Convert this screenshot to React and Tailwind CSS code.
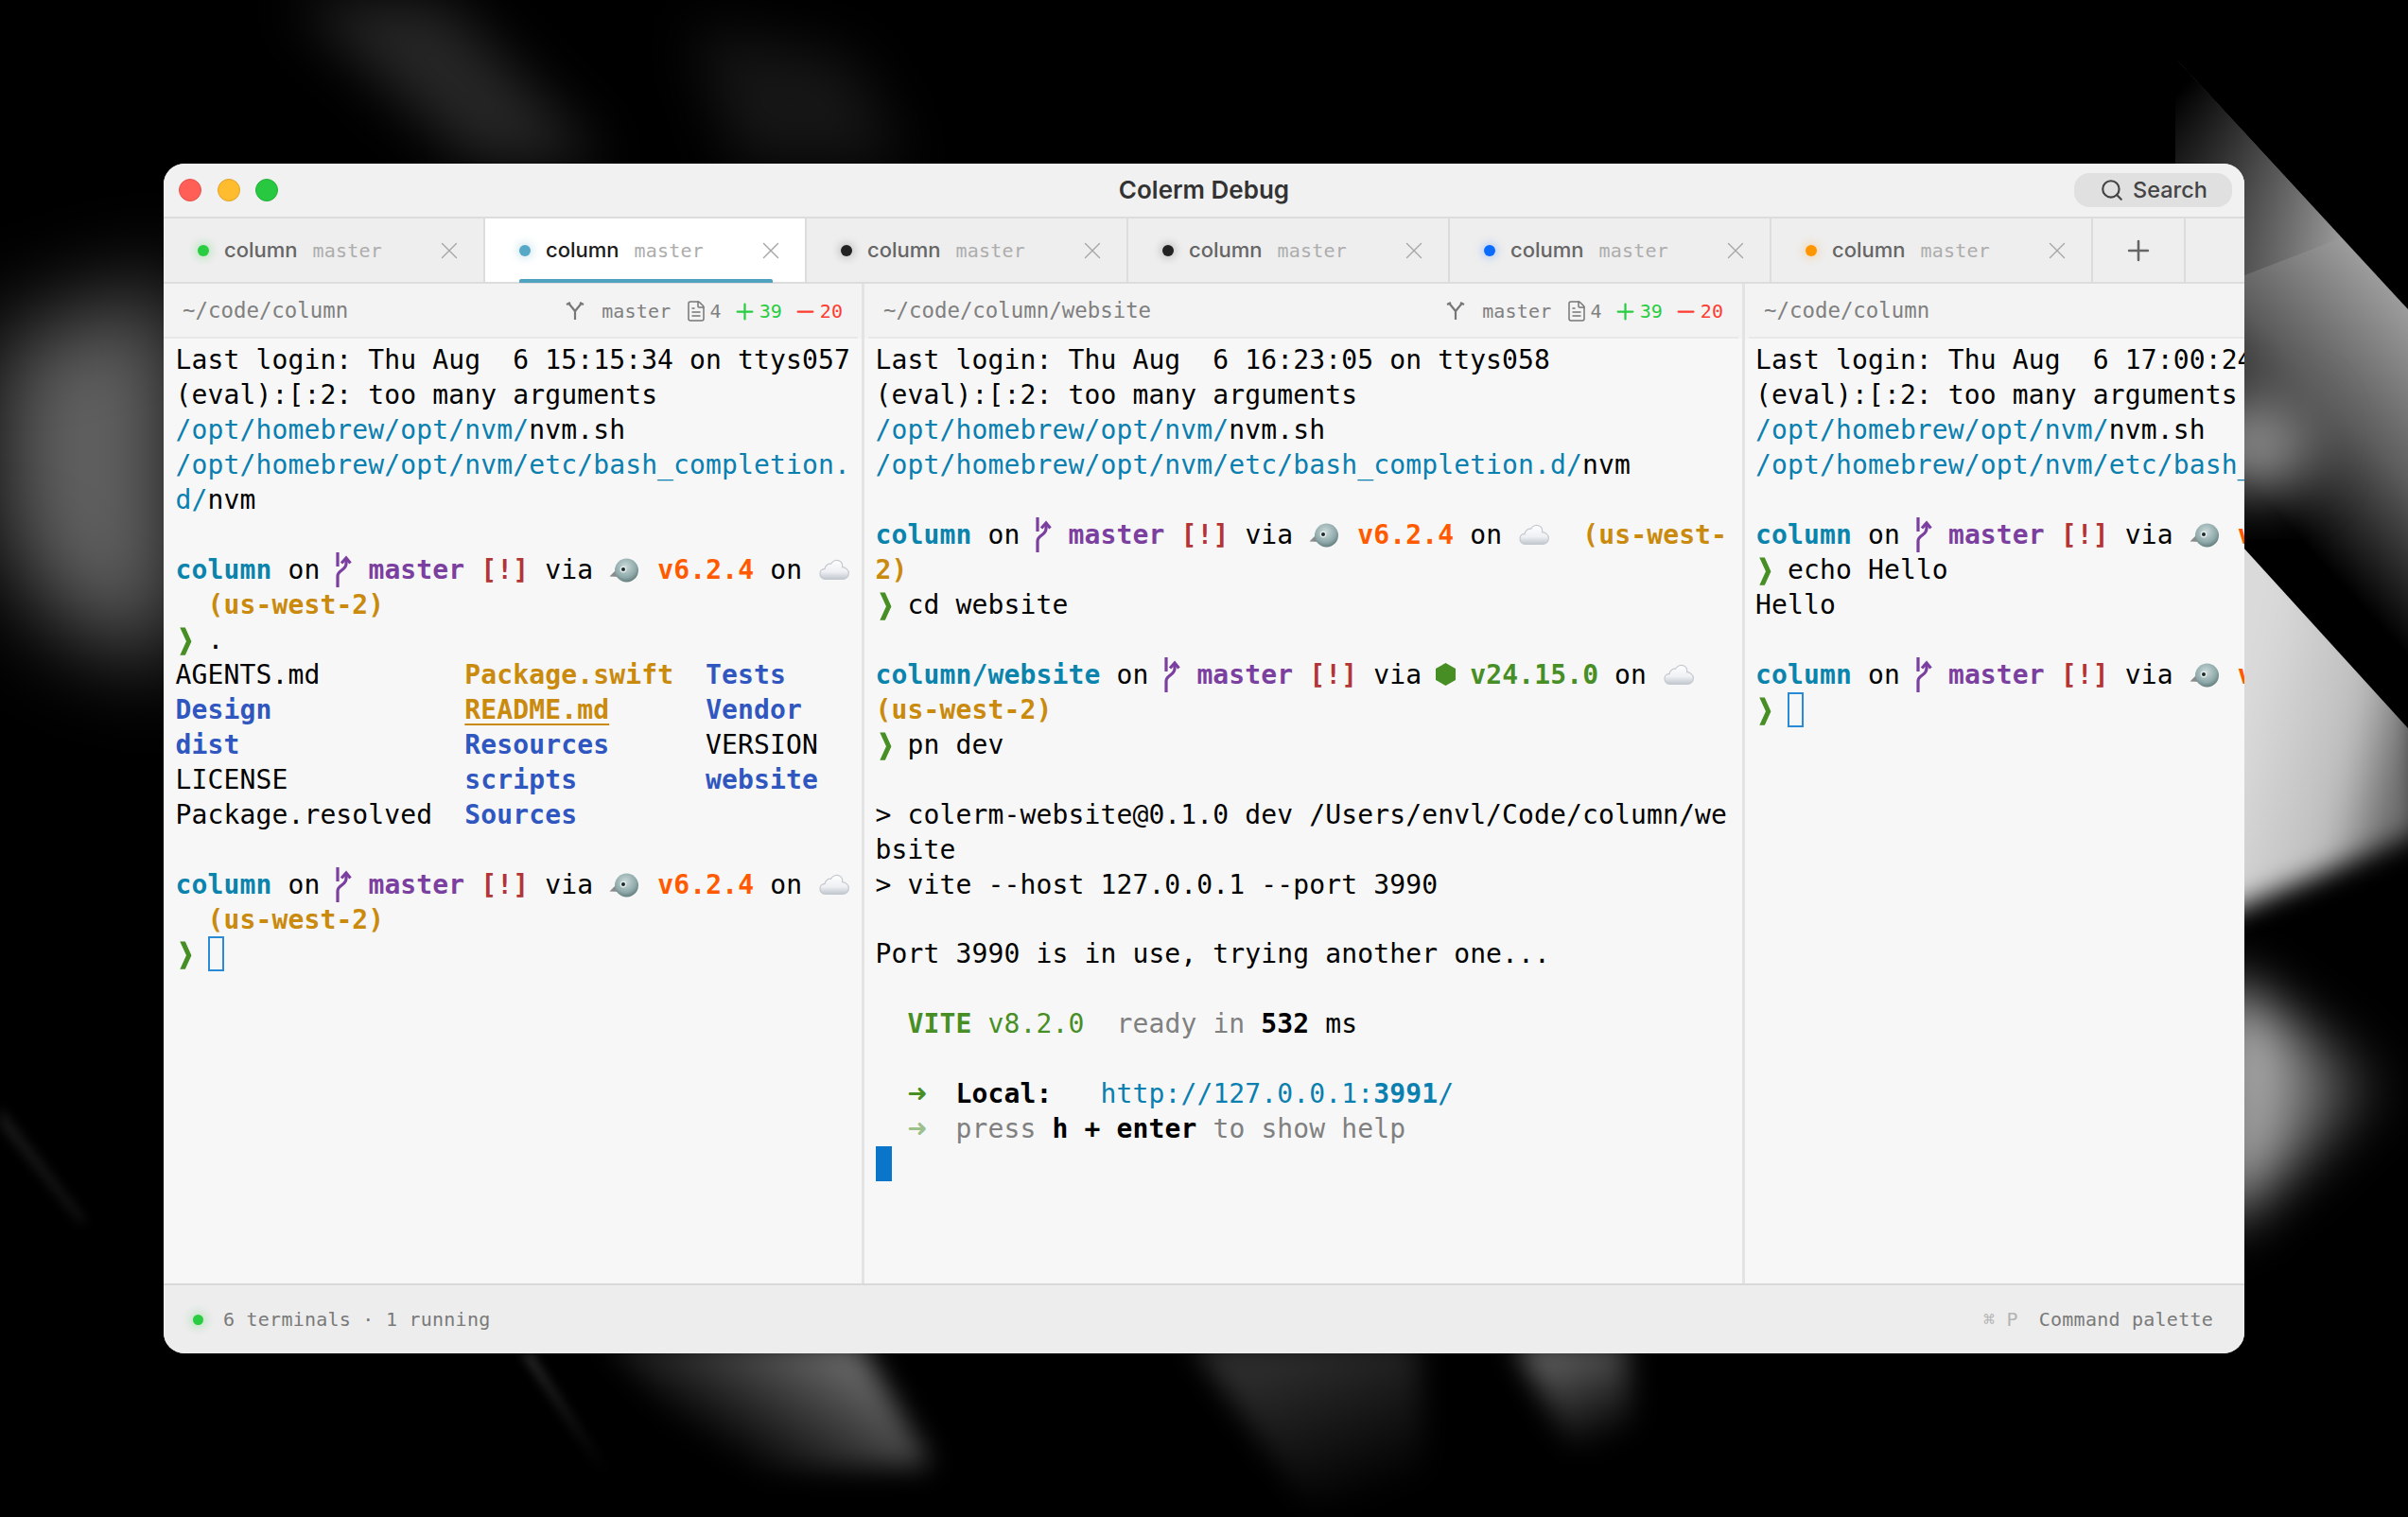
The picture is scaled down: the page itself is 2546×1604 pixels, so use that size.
import React from 'react';
import { FileText, Minus, Plus, Search, X } from 'lucide-react';

const mono = "font-['DejaVu_Sans_Mono',monospace]";

const tabs = [
  { dot: 'bg-[#28cd41] shadow-[0_0_10px_2px_rgba(40,205,65,0.3)]' },
  { dot: 'bg-[#55a8c6] shadow-[0_0_10px_2px_rgba(85,168,198,0.3)]', active: true },
  { dot: 'bg-[#222222] shadow-[0_0_10px_2px_rgba(0,0,0,0.2)]' },
  { dot: 'bg-[#222222] shadow-[0_0_10px_2px_rgba(0,0,0,0.2)]' },
  { dot: 'bg-[#0a6cff] shadow-[0_0_10px_2px_rgba(10,108,255,0.25)]' },
  { dot: 'bg-[#ff9500] shadow-[0_0_10px_2px_rgba(255,149,0,0.25)]' },
];

function Backdrop() {
  return (
    <svg className="absolute inset-0" width="2546" height="1604" viewBox="0 0 2546 1604">
      <defs>
        <filter id="b6" x="-50%" y="-50%" width="200%" height="200%" colorInterpolationFilters="sRGB"><feGaussianBlur stdDeviation="6" /></filter>
        <filter id="b14" x="-50%" y="-50%" width="200%" height="200%" colorInterpolationFilters="sRGB"><feGaussianBlur stdDeviation="14" /></filter>
        <filter id="b30" x="-50%" y="-50%" width="200%" height="200%" colorInterpolationFilters="sRGB"><feGaussianBlur stdDeviation="30" /></filter>
        <filter id="b50" x="-50%" y="-50%" width="200%" height="200%" colorInterpolationFilters="sRGB"><feGaussianBlur stdDeviation="50" /></filter>
        <linearGradient id="band" x1="2500" y1="277" x2="2317" y2="447" gradientUnits="userSpaceOnUse">
          <stop offset="0" stopColor="#9c9c9c" />
          <stop offset="0.5" stopColor="#5c5c5c" />
          <stop offset="1" stopColor="#000" />
        </linearGradient>
        <linearGradient id="bandFade" x1="2300" y1="100" x2="2470" y2="260" gradientUnits="userSpaceOnUse">
          <stop offset="0" stopColor="#000" stopOpacity="1" />
          <stop offset="1" stopColor="#000" stopOpacity="0" />
        </linearGradient>
        <linearGradient id="wedge" x1="2373" y1="760" x2="2546" y2="800" gradientUnits="userSpaceOnUse">
          <stop offset="0" stopColor="#dadada" />
          <stop offset="0.65" stopColor="#bdbdbd" />
          <stop offset="1" stopColor="#6a6a6a" />
        </linearGradient>
        <linearGradient id="low" x1="2373" y1="1130" x2="2530" y2="1150" gradientUnits="userSpaceOnUse">
          <stop offset="0" stopColor="#bcbcbc" />
          <stop offset="1" stopColor="#000" />
        </linearGradient>
        <linearGradient id="st1" x1="880" y1="1431" x2="800" y2="1560" gradientUnits="userSpaceOnUse">
          <stop offset="0" stopColor="#666" />
          <stop offset="1" stopColor="#000" />
        </linearGradient>
        <linearGradient id="st2" x1="1380" y1="1431" x2="1440" y2="1590" gradientUnits="userSpaceOnUse">
          <stop offset="0" stopColor="#2c2c2c" />
          <stop offset="1" stopColor="#000" />
        </linearGradient>
        <linearGradient id="st3" x1="1650" y1="1431" x2="1690" y2="1530" gradientUnits="userSpaceOnUse">
          <stop offset="0" stopColor="#5c5c5c" />
          <stop offset="1" stopColor="#000" />
        </linearGradient>
        <linearGradient id="st4" x1="555" y1="1431" x2="640" y2="1560" gradientUnits="userSpaceOnUse">
          <stop offset="0" stopColor="#4a4a4a" />
          <stop offset="1" stopColor="#000" />
        </linearGradient>
        <clipPath id="topEdge"><path d="M2300 61 L2546 327 V1604 H2300 Z" /></clipPath>
        <clipPath id="wedgeEdge"><path d="M2300 500 L2546 770 V1604 H2300 Z" /></clipPath>
      </defs>
      <g clipPath="url(#topEdge)">
        <path d="M2280 40 L2560 340 L2560 720 L2280 440 Z" fill="url(#band)" />
        <path d="M2280 40 L2480 250 L2350 300 L2280 240 Z" fill="url(#bandFade)" />
        <ellipse cx="2385" cy="470" rx="60" ry="50" fill="#8c8c8c" filter="url(#b30)" />
      </g>
      <g clipPath="url(#wedgeEdge)">
        <path d="M2330 480 L2560 740 L2560 880 L2330 975 Z" fill="url(#wedge)" filter="url(#b14)" />
      </g>
      <path d="M2340 1030 L2530 1150 L2340 1300 Z" fill="url(#low)" filter="url(#b30)" />
      <path d="M0 360 L190 300 L190 700 L60 660 L0 560 Z" fill="#626262" filter="url(#b50)" />
      <path d="M0 1170 L90 1290 L86 1294 L0 1190 Z" fill="#1a1a1a" filter="url(#b6)" />
      <path d="M310 0 L470 0 L640 173 L500 173 Z" fill="#262626" filter="url(#b30)" />
      <path d="M730 30 L900 60 L960 173 L780 173 Z" fill="#161616" filter="url(#b30)" />
      <path d="M640 1420 L909 1420 L985 1550 L760 1560 Z" fill="url(#st1)" filter="url(#b14)" />
      <path d="M553 1431 L560 1431 L645 1560 L640 1560 Z" fill="url(#st4)" filter="url(#b6)" />
      <path d="M1258 1420 L1500 1420 L1510 1590 L1380 1590 Z" fill="url(#st2)" filter="url(#b14)" />
      <path d="M1600 1420 L1720 1420 L1730 1530 L1660 1530 Z" fill="url(#st3)" filter="url(#b14)" />
    </svg>
  );
}

function BranchGlyph() {
  return (
    <span className="inline-block w-[34px] align-top">
      <svg width="18" height="37" viewBox="0 0 18 37" fill="none" stroke="#7b3fa0" strokeWidth="3.2" className="block">
        <path d="M2 0 V15" />
        <path d="M2 37 V25 C2 19 11 19 11 12 V7" />
        <path d="M6 11.5 L11 6 L15.5 11.5" />
      </svg>
    </span>
  );
}

function Bird() {
  return (
    <span className="inline-block w-[34px] align-top">
      <svg width="33" height="27" viewBox="0 0 33 27" className="mt-[5px] block">
        <defs>
          <radialGradient id="birdBody" cx="0.45" cy="0.35" r="0.75">
            <stop offset="0" stopColor="#cbd9d9" />
            <stop offset="0.6" stopColor="#8fa9aa" />
            <stop offset="1" stopColor="#4f6968" />
          </radialGradient>
        </defs>
        <path d="M10 11 L0.5 20.5 L12 21 Z" fill="#8a8a8a" />
        <circle cx="18.5" cy="14" r="12.5" fill="url(#birdBody)" />
        <circle cx="15" cy="13" r="3.4" fill="#e2ebeb" />
        <circle cx="15" cy="13" r="2" fill="#1f2a2a" />
      </svg>
    </span>
  );
}

function Cloud() {
  return (
    <span className="inline-block w-[34px] align-top">
      <svg width="33" height="23" viewBox="0 0 33 23" className="mt-[7px] ml-[1px] block">
        <defs>
          <linearGradient id="cloudFill" x1="0" y1="0" x2="0" y2="1">
            <stop offset="0" stopColor="#ffffff" />
            <stop offset="0.6" stopColor="#eef0f3" />
            <stop offset="1" stopColor="#c0c6ce" />
          </linearGradient>
        </defs>
        <path
          d="M7 21.5 C2.5 21.5 .8 18 1 15 C1.2 12 3.5 10.4 6 10.6 C6.6 6.6 10 4.6 12.6 5.2 C14.4 1.6 18.4 .6 21.4 2 C24 3.2 25 6 24.6 8.6 C28 8.8 31.4 11.6 31.4 15 C31.4 18.6 28.4 21.5 25 21.5 Z"
          fill="url(#cloudFill)"
          stroke="#c4c9cf"
          strokeWidth="1.2"
        />
      </svg>
    </span>
  );
}

function Hexagon() {
  return (
    <span className="inline-block w-[17px] align-top">
      <svg width="21" height="24" viewBox="0 0 21 24" className="mt-[6px] -ml-[2px] block">
        <path d="M10.5 0 L21 6 V18 L10.5 24 L0 18 V6 Z" fill="#478f25" />
      </svg>
    </span>
  );
}

function Chevron() {
  return <span className="inline-block w-[17px] scale-x-[0.7] align-top text-center text-[38px] leading-[37px] font-bold text-[#478f25] [-webkit-text-stroke:1.5px_#478f25]">❯</span>;
}

function Arrow({ faded }) {
  return (
    <span className={`inline-block w-[17px] align-top text-[34px] leading-[37px] font-bold ${faded ? 'text-[#9cc08c]' : 'text-[#478f25]'}`}>➜</span>
  );
}

function Cursor({ filled }) {
  return (
    <span
      className={
        filled
          ? 'inline-block h-[37px] w-[17px] align-top bg-[#0a75c9]'
          : 'inline-block h-[37px] w-[17px] align-top border-2 border-[#2a8ad6]'
      }
    />
  );
}

const Cy = ({ children }) => <span className="font-bold text-[#0b84ad]">{children}</span>;
const Path = ({ children }) => <span className="text-[#0a80b0]">{children}</span>;
const Dir = ({ children }) => <span className="font-bold text-[#3057c0]">{children}</span>;
const Gold = ({ children }) => <span className="font-bold text-[#c98a0d]">{children}</span>;
const Dim = ({ children }) => <span className="text-[#808080]">{children}</span>;
const B = ({ children }) => <span className="font-bold">{children}</span>;

function GitBits() {
  return (
    <>
      {' on '}
      <BranchGlyph />
      <span className="font-bold text-[#7b3fa0]">master</span>{' '}
      <span className="font-bold text-[#b23535]">[!]</span>
      {' via '}
    </>
  );
}

function Prompt({ dir = 'column', tail = true }) {
  return (
    <>
      <Cy>{dir}</Cy>
      <GitBits />
      <Bird /> <span className="font-bold text-[#ff5a00]">v6.2.4</span>
      {tail && (
        <>
          {' on '}
          <Cloud />
        </>
      )}
    </>
  );
}

const leftRows = [
  'Last login: Thu Aug  6 15:15:34 on ttys057',
  '(eval):[:2: too many arguments',
  <><Path>/opt/homebrew/opt/nvm/</Path>nvm.sh</>,
  <Path>/opt/homebrew/opt/nvm/etc/bash_completion.</Path>,
  <><Path>d/</Path>nvm</>,
  '',
  <Prompt />,
  <>{'  '}<Gold>(us-west-2)</Gold></>,
  <><Chevron /> .</>,
  <>{'AGENTS.md         '}<Gold>Package.swift</Gold>{'  '}<Dir>Tests</Dir></>,
  <><Dir>Design</Dir>{'            '}<span className="font-bold text-[#c98a0d] underline underline-offset-[5px]">README.md</span>{'      '}<Dir>Vendor</Dir></>,
  <><Dir>dist</Dir>{'              '}<Dir>Resources</Dir>{'      '}VERSION</>,
  <>{'LICENSE           '}<Dir>scripts</Dir>{'        '}<Dir>website</Dir></>,
  <>{'Package.resolved  '}<Dir>Sources</Dir></>,
  '',
  <Prompt />,
  <>{'  '}<Gold>(us-west-2)</Gold></>,
  <><Chevron /> <Cursor /></>,
];

const midRows = [
  'Last login: Thu Aug  6 16:23:05 on ttys058',
  '(eval):[:2: too many arguments',
  <><Path>/opt/homebrew/opt/nvm/</Path>nvm.sh</>,
  <><Path>/opt/homebrew/opt/nvm/etc/bash_completion.d/</Path>nvm</>,
  '',
  <><Prompt />{'  '}<Gold>(us-west-</Gold></>,
  <Gold>2)</Gold>,
  <><Chevron /> cd website</>,
  '',
  <>
    <Cy>column/website</Cy>
    <GitBits />
    <Hexagon /> <span className="font-bold text-[#478f25]">v24.15.0</span>
    {' on '}
    <Cloud />
  </>,
  <Gold>(us-west-2)</Gold>,
  <><Chevron /> pn dev</>,
  '',
  '> colerm-website@0.1.0 dev /Users/envl/Code/column/we',
  'bsite',
  '> vite --host 127.0.0.1 --port 3990',
  '',
  'Port 3990 is in use, trying another one...',
  '',
  <>{'  '}<span className="font-bold text-[#478f25]">VITE</span> <span className="text-[#478f25]">v8.2.0</span>{'  '}<Dim>ready in </Dim><B>532</B> ms</>,
  '',
  <>{'  '}<Arrow />{'  '}<B>Local:</B>{'   '}<Path>http://127.0.0.1:<B>3991</B>/</Path></>,
  <>{'  '}<Arrow faded />{'  '}<Dim>press </Dim><B>h</B> <B>+</B> <B>enter</B><Dim> to show help</Dim></>,
  <Cursor filled />,
];

const rightRows = [
  'Last login: Thu Aug  6 17:00:24 on ttys059',
  '(eval):[:2: too many arguments',
  <><Path>/opt/homebrew/opt/nvm/</Path>nvm.sh</>,
  <Path>/opt/homebrew/opt/nvm/etc/bash_completion.d/</Path>,
  '',
  <Prompt tail={false} />,
  <><Chevron /> echo Hello</>,
  'Hello',
  '',
  <Prompt tail={false} />,
  <><Chevron /> <Cursor /></>,
];

function Terminal({ rows, pad }) {
  return (
    <div className={`flex-1 overflow-hidden pt-[4px] text-[28px] tracking-[0.13px] text-black ${mono} ${pad}`}>
      {rows.map((row, i) => (
        <div key={i} className="h-[36.97px] whitespace-pre leading-[37px]">
          {row}
        </div>
      ))}
    </div>
  );
}

function GitStatus() {
  return (
    <div className={`ml-auto flex items-center text-[20px] ${mono}`}>
      <svg width="20" height="24" viewBox="0 0 20 24" fill="none" stroke="#777777" strokeWidth="2.2" className="mr-[18px]">
        <path d="M10 21 V12 L3.5 4 M10 12 L16.5 4" />
        <path d="M1 5 L5 3 M15 3 L19 5" />
      </svg>
      <span className="text-[#808080] tracking-[0.2px]">master</span>
      <FileText size={24} strokeWidth={1.5} className="ml-[14px] text-[#777777]" />
      <span className="ml-[3px] text-[#808080]">4</span>
      <Plus size={27} strokeWidth={2} className="ml-[11px] text-[#28cd41]" />
      <span className="ml-[2px] tracking-[0.05px] text-[#28cd41]">39</span>
      <Minus size={27} strokeWidth={2} className="ml-[11px] text-[#ff3b30]" />
      <span className="ml-[2px] tracking-[0.05px] text-[#ff3b30]">20</span>
    </div>
  );
}

function PaneHeader({ path, status, rule, inset }) {
  return (
    <div className={`border-b-2 border-[#e8e8e8] ${rule}`}>
      <div className={`flex h-[56px] items-center pt-[2px] pr-[16px] ${inset}`}>
        <span className={`text-[22.4px] text-[#808080] ${mono}`}>{path}</span>
        {status && <GitStatus />}
      </div>
    </div>
  );
}

function Tab({ dot, active }) {
  return (
    <div
      className={
        active
          ? 'relative flex h-full w-[340px] items-center border-r-2 border-[#dcdcdc] bg-white pl-[36px]'
          : 'relative flex h-full w-[340px] items-center border-r-2 border-[#dcdcdc] pl-[36px]'
      }
    >
      <span className={`h-3 w-3 rounded-full ${dot}`} />
      <span className={`ml-[16px] font-['Inter',sans-serif] text-[22px] font-medium ${active ? 'text-[#1c1c1c]' : 'text-[#666666]'}`}>column</span>
      <span className={`ml-[16px] text-[20px] tracking-[0.2px] text-[#adadad] ${mono}`}>master</span>
      <X size={30} strokeWidth={1.1} className="ml-auto mr-[21px] text-[#a6a6a6]" />
      {active && <span className="absolute bottom-[-1px] left-[36px] h-[4px] w-[268px] rounded-t-[2px] bg-[#4fa3bf]" />}
    </div>
  );
}

export default function App() {
  return (
    <div className="relative flex h-[1604px] w-[2546px] items-center justify-center overflow-hidden bg-black">
      <Backdrop />
      <div className="relative flex h-[1258px] w-[2200px] flex-col overflow-hidden rounded-[22px] bg-[#f7f7f7]">
        {/* title bar */}
        <div className="grid h-[56px] grid-cols-3 items-center bg-[#f1f1f1]">
          <div className="flex items-center gap-[16.5px] pl-[16px]">
            <span className="h-6 w-6 rounded-full border border-[#e5524a] bg-[#ff5f57]" />
            <span className="h-6 w-6 rounded-full border border-[#e0a32a] bg-[#febc2e]" />
            <span className="h-6 w-6 rounded-full border border-[#24b039] bg-[#28c840]" />
          </div>
          <div className="pb-[2px] text-center font-['Inter',sans-serif] text-[26px] font-semibold text-[#333333]">Colerm Debug</div>
          <div className="mr-[13px] flex h-[36px] w-[167px] items-center gap-[9px] justify-self-end rounded-[16px] bg-[#e0e0e0] pl-[27px] font-['Inter',sans-serif] text-[23.5px] font-medium text-[#444444]">
            <Search size={26} strokeWidth={2} className="text-[#444444]" />
            Search
          </div>
        </div>
        {/* tabs */}
        <div className="flex h-[71px] items-center border-y-2 border-[#dcdcdc] bg-[#eeeeee]">
          {tabs.map((tab, i) => (
            <Tab key={i} dot={tab.dot} active={tab.active} />
          ))}
          <div className="flex h-full w-[98px] items-center justify-center border-r-2 border-[#dcdcdc]">
            <Plus size={34} strokeWidth={1.8} className="text-[#666666]" />
          </div>
        </div>
        {/* panes */}
        <div className="flex min-h-0 flex-1">
          <div className="flex w-[741px] flex-col border-r-[3px] border-[#e3e3e3]">
            <div className="bg-[#f3f3f3]">
              <PaneHeader path="~/code/column" status rule="mr-[4px]" inset="pl-[20px]" />
            </div>
            <Terminal rows={leftRows} pad="pl-[12.5px]" />
          </div>
          <div className="flex w-[931px] flex-col border-r-[3px] border-[#e3e3e3]">
            <div className="bg-[#f3f3f3]">
              <PaneHeader path="~/code/column/website" status rule="mx-[4px]" inset="pl-[16px]" />
            </div>
            <Terminal rows={midRows} pad="pl-[11.6px]" />
          </div>
          <div className="flex min-w-0 flex-1 flex-col">
            <div className="bg-[#f3f3f3]">
              <PaneHeader path="~/code/column" rule="ml-[4px]" inset="pl-[16px]" />
            </div>
            <Terminal rows={rightRows} pad="pl-[11px]" />
          </div>
        </div>
        {/* status bar */}
        <div className={`flex h-[74px] items-center border-t-2 border-[#d9d9d9] bg-[#ededed] pr-[33px] pl-[31px] text-[20px] tracking-[0.24px] text-[#7a7a7a] ${mono}`}>
          <span className="h-[11px] w-[11px] rounded-full bg-[#28cd41] shadow-[0_0_10px_3px_rgba(40,205,65,0.25)]" />
          <span className="ml-[21px]">6 terminals · 1 running</span>
          <span className="ml-auto text-[#b4b4b4]">⌘ P</span>
          <span className="ml-[22px]">Command palette</span>
        </div>
      </div>
    </div>
  );
}
